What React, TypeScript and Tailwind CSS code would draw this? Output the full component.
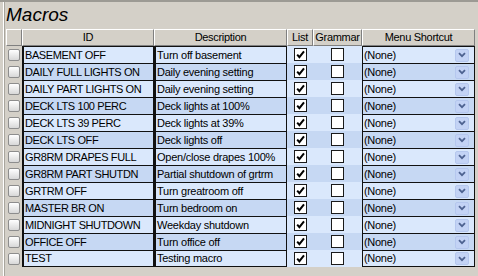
import React from "react";

const macros = [
  { id: "BASEMENT OFF", desc: "Turn off basement" },
  { id: "DAILY FULL LIGHTS ON", desc: "Daily evening setting" },
  { id: "DAILY PART LIGHTS ON", desc: "Daily evening setting" },
  { id: "DECK LTS 100 PERC", desc: "Deck lights at 100%" },
  { id: "DECK LTS 39 PERC", desc: "Deck lights at 39%" },
  { id: "DECK LTS OFF", desc: "Deck lights off" },
  { id: "GR8RM DRAPES FULL", desc: "Open/close drapes 100%" },
  { id: "GR8RM PART SHUTDN", desc: "Partial shutdown of grtrm" },
  { id: "GRTRM OFF", desc: "Turn greatroom off" },
  { id: "MASTER BR ON", desc: "Turn bedroom on" },
  { id: "MIDNIGHT SHUTDOWN", desc: "Weekday shutdown" },
  { id: "OFFICE OFF", desc: "Turn office off" },
  { id: "TEST", desc: "Testing macro" },
];

const font = "font-['Liberation_Sans',Arial,sans-serif]";

function HeaderCell({ w, label }: { w: string; label: string }) {
  return (
    <div
      className={`${w} h-[17px] flex items-center justify-center border-t border-l border-white border-r border-b border-r-[#808080] border-b-[#808080] bg-[#d4d0c8] text-[11px] tracking-[-0.3px] text-black leading-none`}
    >
      {label}
    </div>
  );
}

function CheckBox({ checked }: { checked: boolean }) {
  return (
    <div className="w-[13px] h-[13px] bg-white border border-[#1a1a1a] flex items-center justify-center">
      {checked && (
        <svg width="9" height="9" viewBox="0 0 9 9">
          <path d="M1.2 4.6 L3.4 7.2 L8 1.4" fill="none" stroke="#000" strokeWidth="2" />
        </svg>
      )}
    </div>
  );
}

function DropButton() {
  return (
    <div className="w-[14px] h-[13px] rounded-[2px] bg-[#c3d3f5] border border-[#b5c7ee] flex items-center justify-center">
      <svg width="8" height="6" viewBox="0 0 8 6">
        <path d="M1 1.2 L4 4.2 L7 1.2" fill="none" stroke="#4d6290" strokeWidth="1.8" />
      </svg>
    </div>
  );
}

export default function App() {
  return (
    <div className={`w-[478px] h-[276px] bg-[#d4d0c8] ${font} overflow-hidden border-t-2 border-[#9c9a94]`}>
      <div className="h-full ml-[3px] border-l border-white">
        <div className="h-full border-l border-[#a8a59d] pl-[1px]">
          {/* Title */}
          <div className="h-[27px] pt-[2px] text-[19px] italic text-black leading-[22px]">Macros</div>

          {/* Header */}
          <div className="flex">
            <HeaderCell w="w-[16px]" label="" />
            <HeaderCell w="w-[132px]" label="ID" />
            <HeaderCell w="w-[133px]" label="Description" />
            <HeaderCell w="w-[26px]" label="List" />
            <HeaderCell w="w-[49px]" label="Grammar" />
            <HeaderCell w="w-[113px]" label="Menu Shortcut" />
          </div>

          {/* Rows */}
          <div className="flex flex-col">
            {macros.map((m, i) => {
              const bg = i % 2 === 0 ? "bg-[#dae8fc]" : "bg-[#c6d8f3]";
              const last = i === macros.length - 1;
              return (
                <div key={m.id} className="flex h-[17px]">
                  <div className="w-[16px] flex items-center justify-center">
                    <div className="w-[12px] h-[12px] rounded-[2px] border border-[#8d8d8d] bg-gradient-to-b from-white to-[#d8d8d8]" />
                  </div>
                  <div className={`flex ${bg}`}>
                    <div
                      className={`w-[132px] h-[17px] border-t border-r border-l-2 border-[#111] ${last ? "border-b" : ""} pl-[1px] flex items-center text-[11px] tracking-[-0.4px] text-black whitespace-nowrap overflow-hidden`}
                    >
                      {m.id}
                    </div>
                    <div
                      className={`w-[133px] h-[17px] border-t border-r border-l-2 border-[#111] ${last ? "border-b" : ""} pl-[1px] flex items-center text-[11px] tracking-[-0.25px] text-black whitespace-nowrap overflow-hidden`}
                    >
                      {m.desc}
                    </div>
                    <div className="w-[26px] flex items-center justify-center">
                      <CheckBox checked />
                    </div>
                    <div className="w-[49px] flex items-center justify-center">
                      <CheckBox checked={false} />
                    </div>
                    <div
                      className={`w-[113px] h-[17px] border-t border-x border-[#111] ${last ? "border-b" : ""} pl-[1px] pr-[5px] flex items-center justify-between text-[11px] tracking-[-0.3px] text-black`}
                    >
                      <span>(None)</span>
                      <DropButton />
                    </div>
                  </div>
                </div>
              );
            })}
          </div>
        </div>
      </div>
    </div>
  );
}
